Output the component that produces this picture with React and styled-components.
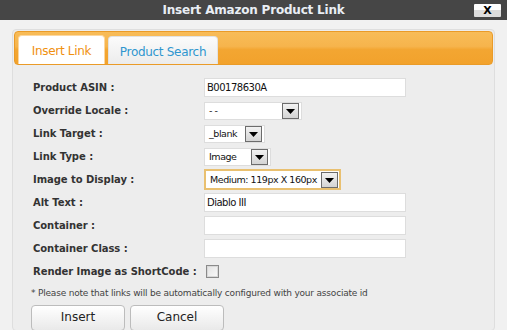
import React from "react";
import styled, { createGlobalStyle } from "styled-components";

const GlobalStyle = createGlobalStyle`
  html, body { margin: 0; padding: 0; }
  body {
    background: #f1f1f1;
    font-family: "DejaVu Sans", Verdana, sans-serif;
    width: 507px;
    height: 330px;
    overflow: hidden;
  }
`;

const TitleBar = styled.div`
  height: 20px;
  background: #464646;
  display: grid;
  grid-template-columns: 1fr auto 1fr;
  align-items: center;
`;

const Title = styled.div`
  grid-column: 2;
  color: #e9eef4;
  font-weight: bold;
  font-size: 12px;
  letter-spacing: -0.2px;
`;

const CloseButton = styled.div`
  grid-column: 3;
  justify-self: end;
  margin-right: 6px;
  width: 27px;
  height: 13px;
  background: linear-gradient(#ffffff 0%, #ffffff 50%, #dcdcdc 50%, #dcdcdc 100%);
  border-radius: 1px;
  display: flex;
  align-items: center;
  justify-content: center;
  font-family: "DejaVu Sans", sans-serif;
  font-weight: 900;
  font-size: 11px;
  color: #000;
  line-height: 1;
`;

const Body = styled.div`
  padding: 9px 12px 0 12px;
`;

const Panel = styled.div`
  border: 1px solid #dedede;
  border-radius: 4px;
  background: #ededed;
  padding: 1px 1px 0 1px;
  height: 299px;
  overflow: hidden;
`;

const TabBar = styled.div`
  height: 29px;
  border: 1px solid #ea9b28;
  border-radius: 4px;
  background: linear-gradient(#f8bc58 0%, #f6b44c 45%, #f3a632 55%, #f2a22c 100%);
  display: flex;
  align-items: flex-end;
  gap: 3px;
  padding: 3px 0 0 3px;
`;

const Tab = styled.div`
  height: ${(p) => (p.$active ? 29 : 28)}px;
  width: ${(p) => p.$w}px;
  box-sizing: border-box;
  border-radius: 4px 4px 0 0;
  border: 1px solid ${(p) => (p.$active ? "#fbd7a0" : "#e2e2e2")};
  border-bottom: none;
  background: ${(p) =>
    p.$active ? "#ffffff" : "linear-gradient(#fbfbfb, #ececec)"};
  color: ${(p) => (p.$active ? "#f0900f" : "#2f96cf")};
  font-size: 12px;
  letter-spacing: -0.3px;
  display: flex;
  align-items: center;
  justify-content: center;
  padding-top: 2px;
`;

const Form = styled.div`
  padding: 13px 0 0 19px;
  display: grid;
  grid-template-columns: 171px auto;
  grid-auto-rows: 19px;
  row-gap: 4px;
  align-items: center;
`;

const Label = styled.div`
  font-weight: bold;
  font-size: 10px;
  color: #333;
  letter-spacing: -0.05px;
  white-space: nowrap;
`;

const TextInput = styled.input`
  box-sizing: border-box;
  width: 202px;
  height: 19px;
  border: 1px solid #dddddd;
  background: #fff;
  font-family: "DejaVu Sans", Verdana, sans-serif;
  font-size: 10px;
  letter-spacing: -0.5px;
  color: #111;
  padding: 0 0 0 2px;
  outline: none;
`;

const SelectBox = styled.div`
  box-sizing: border-box;
  width: ${(p) => p.$w}px;
  height: ${(p) => (p.$focus ? 21 : 18)}px;
  border: ${(p) => (p.$focus ? "2px solid #e9c070" : "1px solid #dddddd")};
  background: #fff;
  display: flex;
  align-items: center;
  justify-content: space-between;
  gap: 3px;
  padding: 0 ${(p) => (p.$focus ? 1 : 2)}px 0 4px;
  font-size: 9.5px;
  letter-spacing: -0.45px;
  color: #111;
  white-space: nowrap;
`;

const Arrow = styled.span`
  box-sizing: border-box;
  flex: none;
  width: 17px;
  height: 16px;
  border: 1px solid #6c6c6c;
  background: linear-gradient(#f2f2f2, #d4d4d4);
  display: flex;
  align-items: center;
  justify-content: center;
  margin-top: 1px;
`;

const CheckRow = styled.div`
  display: flex;
  align-items: center;
  gap: 9px;
  grid-column: 1 / span 2;
`;

const CheckBox = styled.span`
  box-sizing: border-box;
  width: 13px;
  height: 13px;
  border: 1px solid #8a8a8a;
  box-shadow: inset 0 0 0 1px #d8d8d8;
  background: linear-gradient(135deg, #e2e2e2, #fafafa);
`;

const Note = styled.div`
  font-size: 9px;
  color: #444;
  padding: 7px 0 0 17px;
  letter-spacing: -0.2px;
`;

const Buttons = styled.div`
  display: flex;
  gap: 5px;
  padding: 7px 0 0 17px;
`;

const Button = styled.button`
  flex: none;
  width: 94px;
  height: 26px;
  border: 1px solid #bcbcbc;
  border-radius: 4px;
  background: linear-gradient(#ffffff, #e9e9e9);
  font-family: "DejaVu Sans", Verdana, sans-serif;
  font-size: 12px;
  color: #222;
  padding: 0 0 2px;
`;

const ArrowIcon = () => (
  <svg width="9" height="5" viewBox="0 0 9 5">
    <polygon points="0,0 9,0 4.5,5" fill="#000" />
  </svg>
);

const Select = ({ w, value, focus }) => (
  <SelectBox $w={w} $focus={focus}>
    <span>{value}</span>
    <Arrow>
      <ArrowIcon />
    </Arrow>
  </SelectBox>
);

export default function App() {
  return (
    <>
      <GlobalStyle />
      <TitleBar>
        <Title>Insert Amazon Product Link</Title>
        <CloseButton>X</CloseButton>
      </TitleBar>
      <Body>
        <Panel>
          <TabBar>
            <Tab $active $w={87}>Insert Link</Tab>
            <Tab $w={110}>Product Search</Tab>
          </TabBar>
          <Form>
            <Label>Product ASIN :</Label>
            <TextInput defaultValue="B00178630A" />
            <Label>Override Locale :</Label>
            <Select w={98} value="- -" />
            <Label>Link Target :</Label>
            <Select w={61} value="_blank" />
            <Label>Link Type :</Label>
            <Select w={67} value="Image" />
            <Label>Image to Display :</Label>
            <Select w={137} value="Medium: 119px X 160px" focus />
            <Label>Alt Text :</Label>
            <TextInput defaultValue="Diablo III" />
            <Label>Container :</Label>
            <TextInput defaultValue="" />
            <Label>Container Class :</Label>
            <TextInput defaultValue="" />
            <CheckRow>
              <Label>Render Image as ShortCode :</Label>
              <CheckBox />
            </CheckRow>
          </Form>
          <Note>* Please note that links will be automatically configured with your associate id</Note>
          <Buttons>
            <Button>Insert</Button>
            <Button>Cancel</Button>
          </Buttons>
        </Panel>
      </Body>
    </>
  );
}
